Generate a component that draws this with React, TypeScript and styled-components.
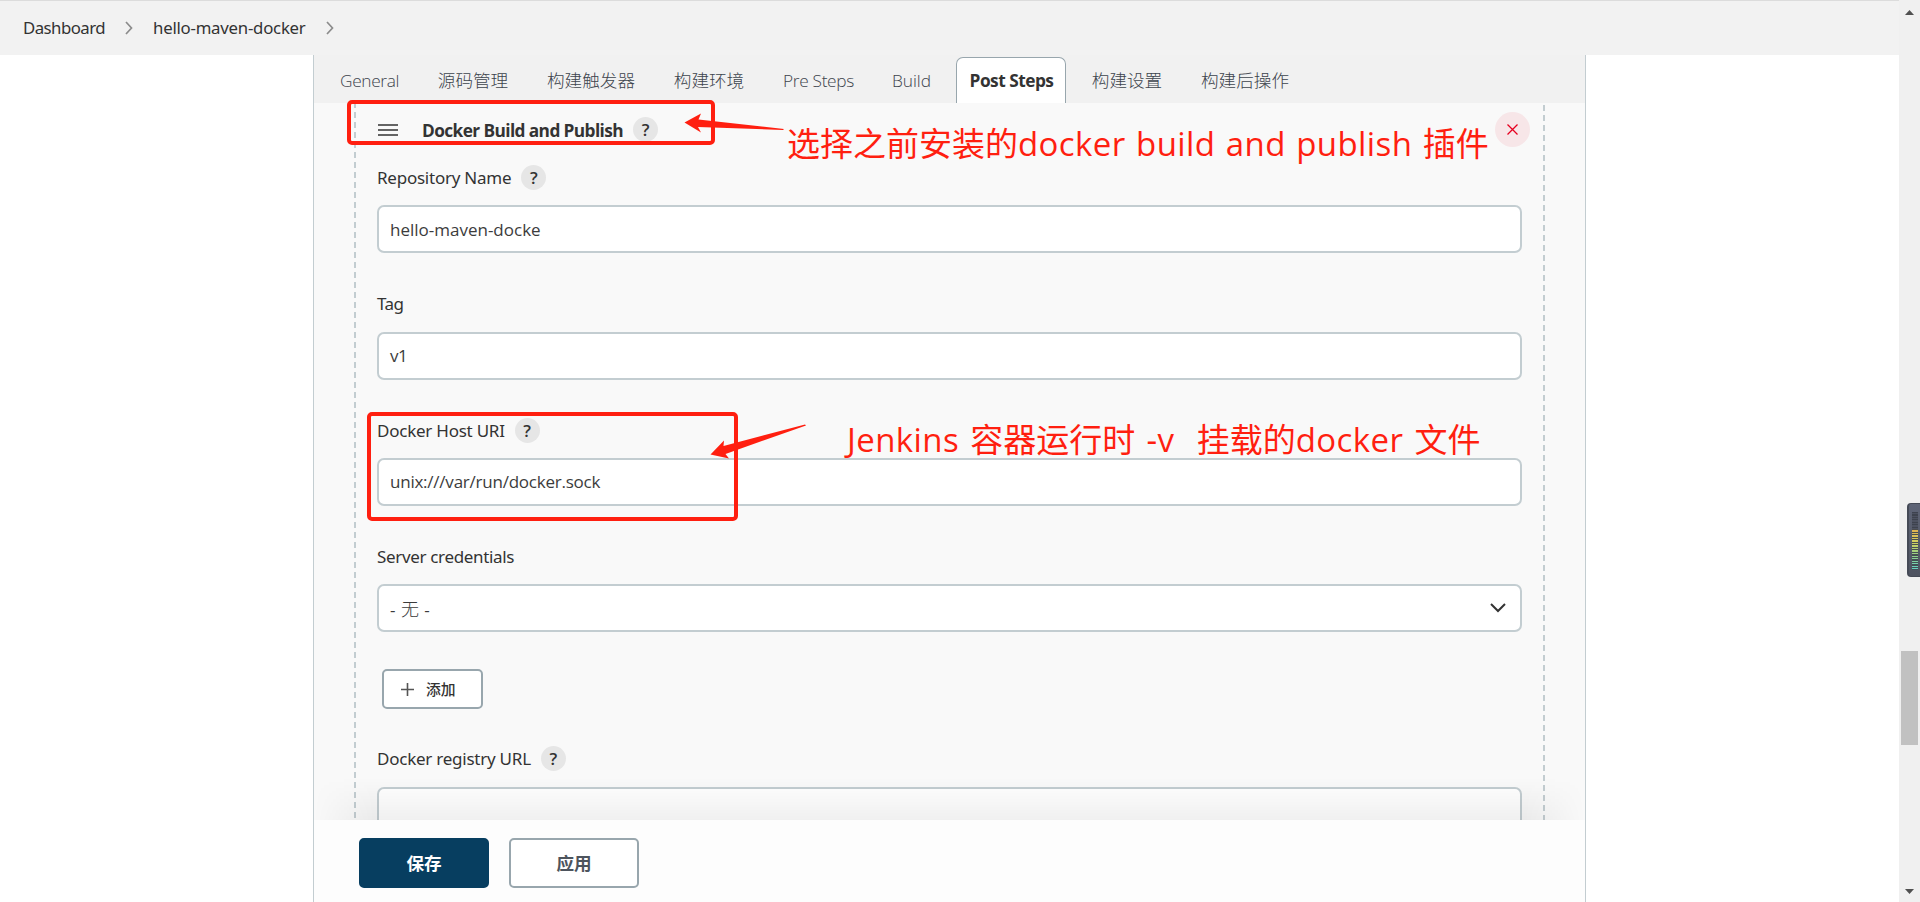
import React from "react";
import styled, { createGlobalStyle, css } from "styled-components";

const Global = createGlobalStyle`
  *, *::before, *::after { box-sizing: border-box; }
  html, body { margin: 0; padding: 0; overflow: hidden; background: #fff; }
  body {
    font-family: "Open Sans", "Noto Sans CJK SC", sans-serif;
    font-size: 17.6px;
    color: #333;
  }
`;

const Screen = styled.div`
  position: relative;
  display: flex;
  width: 1920px;
  height: 902px;
  overflow: hidden;
`;

const Page = styled.div`
  flex: 1;
  display: flex;
  flex-direction: column;
  min-width: 0;
`;

const Breadcrumbs = styled.nav`
  display: flex;
  align-items: center;
  height: 55px;
  padding-left: 23px;
  background: #f2f2f2;
  border-top: 1px solid #dcdcdc;
  flex: none;
`;

const Crumb = styled.span<{ $track?: number }>`
  font-family: "Noto Sans", sans-serif;
  font-size: 16.8px;
  font-weight: 450;
  line-height: 24px;
  letter-spacing: ${(p) => p.$track ?? 0}px;
  white-space: pre;
`;

const CrumbArrow = styled.svg`
  width: 8px;
  height: 14px;
  margin: 0 20px;
  fill: none;
  stroke: #8c8c8c;
  stroke-width: 1.7;
`;

const Panel = styled.main`
  flex: 1;
  display: flex;
  flex-direction: column;
  width: 1273px;
  margin-left: 313px;
  min-height: 0;
  border: solid #c3cdd1;
  border-width: 0 1px;
  background: #f9f9f9;
`;

const TabBar = styled.div`
  display: flex;
  align-items: flex-end;
  height: 48px;
  padding-left: 12px;
  background: #f1f1f1;
  flex: none;
`;

const Tab = styled.div<{ $width: number; $active?: boolean; $cjk?: boolean; $track?: number }>`
  display: flex;
  align-items: center;
  justify-content: center;
  width: ${(p) => p.$width}px;
  height: 46px;
  padding-left: ${(p) => (p.$cjk ? 0 : 1)}px;
  padding-bottom: ${(p) => (p.$cjk ? 2 : 0)}px;
  color: #3d444d;
  font-size: ${(p) => (p.$cjk ? 17.6 : 17.3)}px;
  font-weight: 300;
  letter-spacing: ${(p) => p.$track ?? 0}px;
  white-space: nowrap;
  ${(p) =>
    p.$active &&
    css`
      background: #fff;
      color: #333;
      font-weight: 700;
      border: 1px solid #98a6ad;
      border-bottom: 0;
      border-radius: 7px 7px 0 0;
    `}
`;

const Content = styled.div`
  flex: 1;
  min-height: 0;
  overflow: hidden;
  padding: 0 40px;
`;

const dash = css`
  content: "";
  width: 2px;
  flex: none;
`;

const Chunk = styled.section`
  display: flex;
  height: 760px;
  &::before {
    ${dash}
    background: repeating-linear-gradient(#c3cdd1 0 5px, transparent 5px 9px, #c3cdd1 9px 10px);
  }
  &::after {
    ${dash}
    background: repeating-linear-gradient(transparent 0 2px, #c3cdd1 2px 8px, transparent 8px 10px);
  }
`;

const ChunkBody = styled.div`
  flex: 1;
  padding: 9px 13px 0 21px;
`;

const ChunkHead = styled.header`
  display: flex;
  align-items: center;
  height: 35px;
  margin-bottom: 18px;
`;

const DragHandle = styled.svg`
  width: 20px;
  height: 12px;
  margin-left: 1px;
  stroke: #333;
  stroke-width: 1.6;
`;

const ChunkTitle = styled.b`
  margin: 2px 10px 0 24px;
  font-size: 17.3px;
  font-weight: 700;
  letter-spacing: -0.6px;
`;

const HelpDot = styled.span`
  display: flex;
  align-items: center;
  justify-content: center;
  width: 25px;
  height: 25px;
  border-radius: 50%;
  background: #e6e6e6;
  font-size: 17px;
  font-weight: 600;
`;

const CloseButton = styled.button`
  display: flex;
  align-items: center;
  justify-content: center;
  width: 35px;
  height: 35px;
  margin-left: auto;
  padding: 0;
  border: 0;
  border-radius: 50%;
  background: #f7e6e8;
  color: #e6001f;
`;

const Field = styled.div<{ $after?: number }>`
  margin-bottom: ${(p) => p.$after ?? 38}px;
  padding-right: 8px;
`;

const LabelRow = styled.label`
  display: flex;
  align-items: center;
  gap: 10px;
  height: 25px;
  margin-bottom: 15.33px;
`;

const LabelText = styled.span<{ $track?: number }>`
  font-family: "Noto Sans", sans-serif;
  font-size: 17px;
  font-weight: 450;
  letter-spacing: ${(p) => p.$track ?? -0.24}px;
`;

const InputBox = styled.div`
  display: flex;
  align-items: center;
  justify-content: space-between;
  height: 48px;
  padding: 0 14px 0 11px;
  border: 2px solid #c3cdd1;
  border-radius: 7px;
  background: #fff;
`;

const Value = styled.span<{ $track?: number }>`
  font-size: 17px;
  color: #3c3c3c;
  letter-spacing: ${(p) => p.$track ?? 0}px;
`;

const LightGlyph = styled.span`
  font-size: 18px;
  font-weight: 300;
`;

const AddButton = styled.button`
  display: flex;
  align-items: center;
  width: 101px;
  height: 40px;
  margin: 0 0 37px 5px;
  padding: 0 0 0 17px;
  gap: 12px;
  border: 2px solid #98a6ad;
  border-radius: 5px;
  background: #fff;
  color: #333;
  font: 500 14.8px "Noto Sans CJK SC", sans-serif;
`;

const AddText = styled.span`
  padding-bottom: 2px;
`;

const Footer = styled.footer`
  display: flex;
  gap: 20px;
  height: 82px;
  flex: none;
  padding: 18px 0 0 45px;
  background: #fdfdfd;
  position: relative;
  z-index: 1;
  &::before {
    content: "";
    position: absolute;
    left: 0;
    right: 0;
    bottom: 100%;
    height: 42px;
    background: linear-gradient(rgba(0, 0, 0, 0), rgba(0, 0, 0, 0.06));
    mask-image: linear-gradient(90deg, transparent, #000 60px, #000 calc(100% - 60px), transparent);
  }
`;

const ActionButton = styled.button<{ $primary?: boolean }>`
  width: 130px;
  height: 50px;
  padding: 0 0 2px;
  border: 2px solid ${(p) => (p.$primary ? "#073e60" : "#98a6ad")};
  border-radius: 5px;
  background: ${(p) => (p.$primary ? "#073e60" : "#fff")};
  color: ${(p) => (p.$primary ? "#fff" : "#4d545d")};
  font: 700 17.6px "Noto Sans CJK SC", sans-serif;
`;

const ScrollTrack = styled.aside`
  position: relative;
  width: 21px;
  flex: none;
  background: #f0f0f0;
`;

const ScrollThumb = styled.div`
  height: 94px;
  margin: 651px 2px 0;
  background: #c1c1c1;
`;

const ScrollArrow = styled.svg<{ $end?: boolean }>`
  position: absolute;
  left: 6px;
  ${(p) => (p.$end ? "bottom: 8px;" : "top: 10px;")}
  width: 9px;
  height: 5px;
  fill: #505050;
`;

const Meter = styled.div`
  position: absolute;
  top: 503px;
  right: 0;
  width: 13px;
  height: 74px;
  padding: 8px 2px 7px 3px;
  border: solid #454a56;
  border-width: 1px 0 1px 2px;
  border-radius: 4px 0 0 4px;
  background: linear-gradient(#5e6476, #4e5360);
`;

const MeterBars = styled.div`
  height: 58px;
  width: 6px;
  background:
    repeating-linear-gradient(rgba(60, 65, 76, 0.9) 0 1px, transparent 1px 2.5px),
    linear-gradient(#4d5261 0 17px, #e0b050 17px, #d2d060 30px, #8fd08a 44px, #62d0c4 58px);
`;

const Note = styled.div<{ $x: number; $y: number; $gap: number }>`
  position: absolute;
  left: ${(p) => p.$x}px;
  top: ${(p) => p.$y}px;
  color: #ff1f10;
  font-size: 33px;
  line-height: 44px;
  word-spacing: ${(p) => p.$gap}px;
  white-space: pre;
`;

const Latin = styled.span`
  letter-spacing: 0.4px;
`;

const Frame = styled.div<{ $x: number; $y: number; $w: number; $h: number }>`
  position: absolute;
  left: ${(p) => p.$x}px;
  top: ${(p) => p.$y}px;
  width: ${(p) => p.$w}px;
  height: ${(p) => p.$h}px;
  border: 4px solid #ff1f10;
  border-radius: 5px;
`;

const Arrows = styled.svg`
  position: absolute;
  inset: 0;
  width: 1920px;
  height: 902px;
  fill: #ff1f10;
  pointer-events: none;
`;

const ArrowRight = () => (
  <CrumbArrow viewBox="0 0 8 14">
    <path d="M1 1l5.5 6L1 13" />
  </CrumbArrow>
);

export default function App() {
  return (
    <Screen>
      <Global />
      <Page>
        <Breadcrumbs>
          <Crumb $track={-0.54}>Dashboard</Crumb>
          <ArrowRight />
          <Crumb $track={-0.24}>hello-maven-docker</Crumb>
          <ArrowRight />
        </Breadcrumbs>
        <Panel>
          <TabBar>
            <Tab $width={86} $track={-0.35}>General</Tab>
            <Tab $width={122} $cjk>源码管理</Tab>
            <Tab $width={114} $cjk>构建触发器</Tab>
            <Tab $width={122} $cjk>构建环境</Tab>
            <Tab $width={96} $track={-0.32}>Pre Steps</Tab>
            <Tab $width={90}>Build</Tab>
            <Tab $width={110} $active $track={-0.5}>Post Steps</Tab>
            <Tab $width={122} $cjk>构建设置</Tab>
            <Tab $width={114} $cjk>构建后操作</Tab>
          </TabBar>
          <Content>
            <Chunk>
              <ChunkBody>
                <ChunkHead>
                  <DragHandle viewBox="0 0 20 12">
                    <path d="M0 1h20M0 6h20M0 11h20" />
                  </DragHandle>
                  <ChunkTitle>Docker Build and Publish</ChunkTitle>
                  <HelpDot>?</HelpDot>
                  <CloseButton>
                    <svg width="11" height="11" viewBox="0 0 11 11" stroke="currentColor" strokeWidth="1.3">
                      <path d="M.5.5l10 10M10.5.5l-10 10" />
                    </svg>
                  </CloseButton>
                </ChunkHead>
                <Field>
                  <LabelRow><LabelText>Repository Name</LabelText><HelpDot>?</HelpDot></LabelRow>
                  <InputBox><Value>hello-maven-docke</Value></InputBox>
                </Field>
                <Field>
                  <LabelRow><LabelText $track={-0.6}>Tag</LabelText></LabelRow>
                  <InputBox><Value $track={-0.5}>v1</Value></InputBox>
                </Field>
                <Field>
                  <LabelRow><LabelText>Docker Host URI</LabelText><HelpDot>?</HelpDot></LabelRow>
                  <InputBox><Value $track={-0.23}>unix:///var/run/docker.sock</Value></InputBox>
                </Field>
                <Field $after={37}>
                  <LabelRow><LabelText $track={-0.34}>Server credentials</LabelText></LabelRow>
                  <InputBox>
                    <Value $track={0.5}>- <LightGlyph>无</LightGlyph> -</Value>
                    <svg width="16" height="10" viewBox="0 0 16 10" fill="none" stroke="#333" strokeWidth="2">
                      <path d="M1 1l7 7 7-7" />
                    </svg>
                  </InputBox>
                </Field>
                <AddButton>
                  <svg width="13" height="13" viewBox="0 0 13 13" stroke="#555" strokeWidth="1.6">
                    <path d="M6.5 0v13M0 6.5h13" />
                  </svg>
                  <AddText>添加</AddText>
                </AddButton>
                <Field>
                  <LabelRow><LabelText>Docker registry URL</LabelText><HelpDot>?</HelpDot></LabelRow>
                  <InputBox />
                </Field>
              </ChunkBody>
            </Chunk>
          </Content>
          <Footer>
            <ActionButton $primary>保存</ActionButton>
            <ActionButton>应用</ActionButton>
          </Footer>
        </Panel>
      </Page>
      <ScrollTrack>
        <ScrollArrow viewBox="0 0 9 5"><path d="M0 5h9L4.5 0z" /></ScrollArrow>
        <ScrollThumb />
        <ScrollArrow $end viewBox="0 0 9 5"><path d="M0 0h9L4.5 5z" /></ScrollArrow>
        <Meter><MeterBars /></Meter>
      </ScrollTrack>
      <Frame $x={347} $y={100} $w={368} $h={45} />
      <Frame $x={367} $y={412} $w={371} $h={109} />
      <Note $x={787} $y={122} $gap={1.5}>选择之前安装的<Latin>docker build and publish </Latin>插件</Note>
      <Note $x={847} $y={418} $gap={2.2}><Latin>Jenkins </Latin>容器运行时<Latin> -v  </Latin>挂载的<Latin>docker </Latin>文件</Note>
      <Arrows viewBox="0 0 1920 902">
        <path d="M684.500 122.500L701 113.500L698.500 119.500L784 129L783 130L698 127L701 132.500Z" />
        <path d="M710.500 454.500L724 440.500L723.500 446L805 424.500L806 425.500L725.500 454L729 458.500Z" />
      </Arrows>
    </Screen>
  );
}
